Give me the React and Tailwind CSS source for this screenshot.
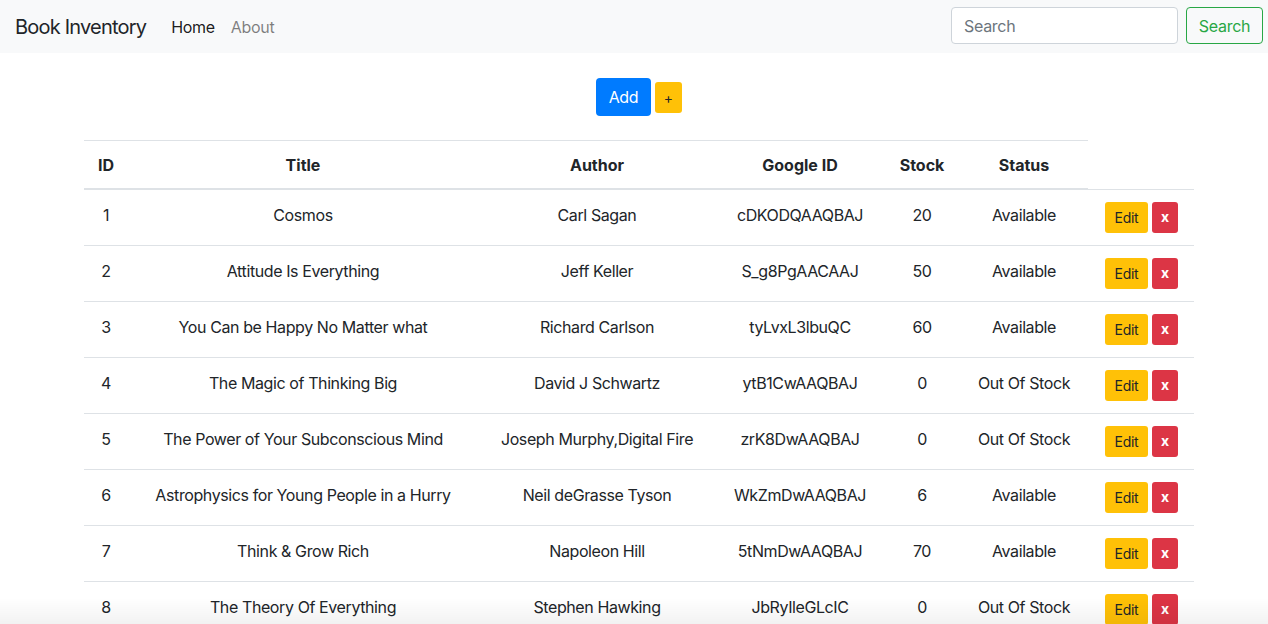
const BOOKS = [
  { id: 1, title: 'Cosmos', author: 'Carl Sagan', gid: 'cDKODQAAQBAJ', stock: 20, status: 'Available' },
  { id: 2, title: 'Attitude Is Everything', author: 'Jeff Keller', gid: 'S_g8PgAACAAJ', stock: 50, status: 'Available' },
  { id: 3, title: 'You Can be Happy No Matter what', author: 'Richard Carlson', gid: 'tyLvxL3lbuQC', stock: 60, status: 'Available' },
  { id: 4, title: 'The Magic of Thinking Big', author: 'David J Schwartz', gid: 'ytB1CwAAQBAJ', stock: 0, status: 'Out Of Stock' },
  { id: 5, title: 'The Power of Your Subconscious Mind', author: 'Joseph Murphy,Digital Fire', gid: 'zrK8DwAAQBAJ', stock: 0, status: 'Out Of Stock' },
  { id: 6, title: 'Astrophysics for Young People in a Hurry', author: 'Neil deGrasse Tyson', gid: 'WkZmDwAAQBAJ', stock: 6, status: 'Available' },
  { id: 7, title: 'Think & Grow Rich', author: 'Napoleon Hill', gid: '5tNmDwAAQBAJ', stock: 70, status: 'Available' },
  { id: 8, title: 'The Theory Of Everything', author: 'Stephen Hawking', gid: 'JbRyIleGLcIC', stock: 0, status: 'Out Of Stock' },
];

const HEADERS = ['ID', 'Title', 'Author', 'Google ID', 'Stock', 'Status'];

function Navbar() {
  return (
    <nav className="flex items-center h-[53px] bg-[#f8f9fa] pl-[15px] pr-[5px]">
      <span className="text-[20px] tracking-[-0.8px] text-[#212529] mr-[25px]">Book Inventory</span>
      <a className="text-[16px] tracking-[-0.3px] text-black/90 mr-[16px]">Home</a>
      <a className="text-[16px] tracking-[-0.3px] text-black/50">About</a>
      <div className="ml-auto flex items-center gap-[8px] -mt-[2px]">
        <input
          placeholder="Search"
          className="w-[227px] h-[37px] px-[12px] text-[16px] tracking-[-0.3px] bg-white border border-[#ced4da] rounded-[4px] placeholder:text-[#6c757d] outline-none"
        />
        <button className="h-[37px] w-[77px] text-[16px] tracking-[-0.3px] text-[#28a745] border border-[#28a745] rounded-[4px]">
          Search
        </button>
      </div>
    </nav>
  );
}

function BookRow({ book }) {
  const cell = 'px-[12px] pt-[13px] pb-[10px] text-center align-top tracking-[-0.4px]';
  return (
    <tr className="border-t border-[#dee2e6]">
      <td className={cell}>{book.id}</td>
      <td className={cell}>{book.title}</td>
      <td className={cell}>{book.author}</td>
      <td className={cell}>{book.gid}</td>
      <td className={cell}>{book.stock}</td>
      <td className={cell}>{book.status}</td>
      <td className="px-[12px] pt-[12px] pb-[12px] align-top whitespace-nowrap">
        <div className="flex gap-[4px] pl-[5px]">
          <button className="h-[31px] w-[43px] text-[14px] tracking-[-0.3px] text-[#212529] bg-[#ffc107] rounded-[3px] pt-[2px]">Edit</button>
          <button className="h-[31px] w-[26px] text-[14px] font-bold text-white bg-[#dc3545] rounded-[3px]">x</button>
        </div>
      </td>
    </tr>
  );
}

export default function App() {
  return (
    <div className="relative min-h-[624px] bg-white text-[#212529] font-['Inter','Liberation_Sans',sans-serif]">
      <Navbar />

      <div className="flex justify-center items-center gap-[4px] pt-[25px] pl-[10px]">
        <button className="h-[38px] w-[55px] text-[16px] tracking-[-0.3px] text-white bg-[#007bff] rounded-[4px]">Add</button>
        <button className="h-[31px] w-[27px] text-[14px] text-[#212529] bg-[#ffc107] rounded-[3px]">+</button>
      </div>

      <div className="ml-[84px] w-[1110px] mt-[24px]">
        <table className="w-full table-fixed border-collapse text-[16px] leading-[24px]">
          <colgroup>
            <col className="w-[44px]" />
            <col className="w-[350px]" />
            <col className="w-[238px]" />
            <col className="w-[168px]" />
            <col className="w-[76px]" />
            <col className="w-[128px]" />
            <col className="w-[106px]" />
          </colgroup>
          <thead>
            <tr>
              {HEADERS.map((h) => (
                <th
                  key={h}
                  className="px-[12px] pt-[12px] pb-[11px] text-center font-bold border-t border-b-2 border-[#dee2e6]"
                >
                  {h}
                </th>
              ))}
            </tr>
          </thead>
          <tbody>
            {BOOKS.map((b) => (
              <BookRow key={b.id} book={b} />
            ))}
          </tbody>
        </table>
      </div>

      {/* soft fade at the bottom edge */}
      <div className="pointer-events-none fixed left-0 right-0 bottom-0 h-[26px] bg-gradient-to-b from-transparent to-black/[0.05]" />
    </div>
  );
}
